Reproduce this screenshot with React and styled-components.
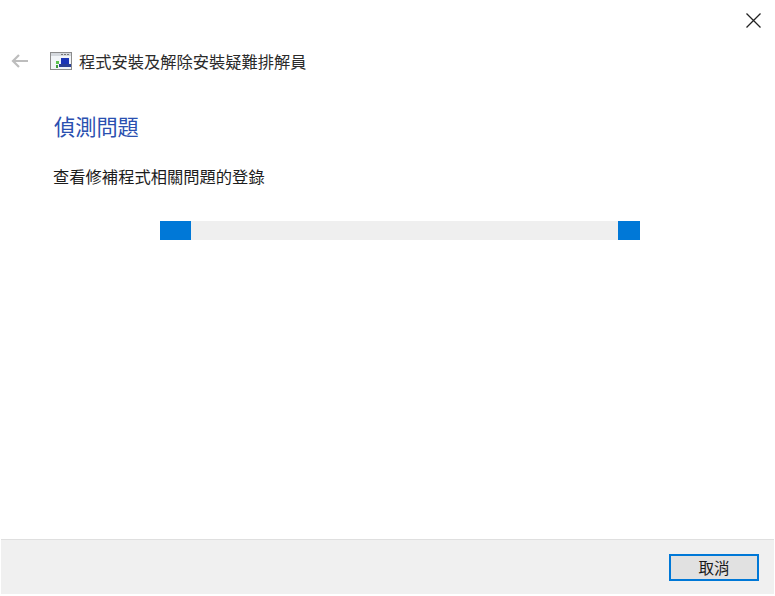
import React from 'react';
import styled, { createGlobalStyle } from 'styled-components';

const GlobalStyle = createGlobalStyle`
  html, body {
    margin: 0;
    padding: 0;
    background: #fff;
  }
`;

const Screen = styled.div`
  width: 775px;
  height: 596px;
  background: #fff;
  display: flex;
  flex-direction: column;
  overflow: hidden;
  font-family: "Noto Sans CJK TC", "Noto Sans", sans-serif;
`;

const TopBar = styled.div`
  height: 42px;
  padding: 13px 14px 0 0;
  box-sizing: border-box;
  display: flex;
  justify-content: flex-end;
  align-items: flex-start;
`;

const CloseButton = styled.button`
  width: 15px;
  height: 15px;
  padding: 0;
  border: none;
  background: none;
  display: block;
`;

const TitleRow = styled.div`
  height: 38px;
  padding-left: 11px;
  display: flex;
  align-items: center;
`;

const BackButton = styled.button`
  width: 18px;
  height: 14px;
  padding: 0;
  border: none;
  background: none;
  margin-right: 21px;
`;

const AppIcon = styled.svg`
  width: 23px;
  height: 18px;
  margin-right: 6px;
`;

const WindowTitle = styled.span`
  font-size: 16.25px;
  line-height: 20px;
  color: #2b2b2b;
  white-space: nowrap;
`;

const Content = styled.main`
  flex: 1;
  padding: 32px 0 0 53px;
  display: flex;
  flex-direction: column;
`;

const Heading = styled.h1`
  margin: 0 0 0 1px;
  font-size: 21.2px;
  line-height: 28px;
  font-weight: 400;
  color: #2a50b0;
`;

const Status = styled.p`
  margin: 25px 0 0;
  font-size: 16.3px;
  line-height: 22px;
  color: #1c1c1c;
`;

const Progress = styled.div`
  width: 480px;
  height: 19px;
  margin: 34px 0 0 107px;
  background: #efefef;
  display: flex;
  justify-content: space-between;
`;

const ProgressBlock = styled.div`
  width: ${(p) => p.$width}px;
  background: #0078d7;
`;

const Footer = styled.footer`
  height: 55px;
  margin: 0 1px 2px;
  box-sizing: border-box;
  background: #f0f0f0;
  border-top: 1px solid #dfdfdf;
  display: flex;
  justify-content: flex-end;
  align-items: center;
  padding: 0 15px 0 0;
`;

const CancelButton = styled.button`
  width: 90px;
  height: 27px;
  box-sizing: border-box;
  border: 2px solid #0078d7;
  background: #e1e1e1;
  padding: 0;
  font: inherit;
  font-size: 15.5px;
  line-height: 20px;
  color: #1a1a1a;
`;

export default function App() {
  return (
    <Screen>
      <GlobalStyle />
      <TopBar>
        <CloseButton aria-label="關閉">
          <svg width="15" height="15" viewBox="0 0 15 15">
            <path d="M0.5 0.5L14.5 14.5M14.5 0.5L0.5 14.5" stroke="#222" strokeWidth="1.3" fill="none" />
          </svg>
        </CloseButton>
      </TopBar>
      <TitleRow>
        <BackButton aria-label="返回">
          <svg width="18" height="14" viewBox="0 0 18 14">
            <path d="M17 7H2M8 1L2 7l6 6" stroke="#bdbdbd" strokeWidth="2.2" fill="none" />
          </svg>
        </BackButton>
        <AppIcon viewBox="0 0 23 18">
          <rect x="0.5" y="0.5" width="21" height="17" fill="#f2f5f8" stroke="#8c8c8c" />
          <rect x="1" y="1" width="20" height="3" fill="#d4d8dd" />
          <path d="M11 2.5h2M14 2.5h2M17 2.5h2" stroke="#777" strokeWidth="1" />
          <rect x="11" y="6" width="8" height="6" fill="#1c35b5" />
          <rect x="9" y="12" width="12" height="3" fill="#2a3f95" />
          <rect x="6" y="9" width="3" height="3" fill="#5cc24e" />
          <rect x="6" y="13" width="2" height="3" fill="#3f9a3a" />
        </AppIcon>
        <WindowTitle>程式安裝及解除安裝疑難排解員</WindowTitle>
      </TitleRow>
      <Content>
        <Heading>偵測問題</Heading>
        <Status>查看修補程式相關問題的登錄</Status>
        <Progress>
          <ProgressBlock $width={31} />
          <ProgressBlock $width={22} />
        </Progress>
      </Content>
      <Footer>
        <CancelButton>取消</CancelButton>
      </Footer>
    </Screen>
  );
}
